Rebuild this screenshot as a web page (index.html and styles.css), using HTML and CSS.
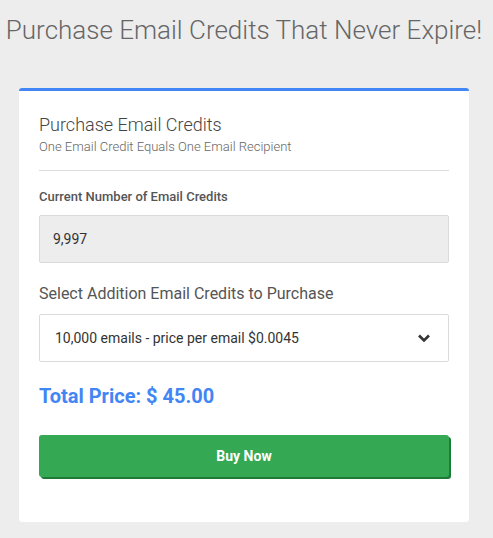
FILE: index.html
```html
<!DOCTYPE html>
<html lang="en">
<head>
    <meta charset="UTF-8">
    <meta name="viewport" content="width=device-width, initial-scale=1.0">
    <title>Purchase Email Credits</title>
    <link rel="stylesheet" href="styles.css">
</head>
<body>
<div class="page">
    <h1 class="page-title">Purchase Email Credits That Never Expire!</h1>

    <div class="card">
        <div class="card-head">
            <h2>Purchase Email Credits</h2>
            <p>One Email Credit Equals One Email Recipient</p>
        </div>

        <form id="creditsForm">
            <label class="small-label" for="current_credits">Current Number of Email Credits</label>
            <input type="text" id="current_credits" value="9,997" readonly>

            <label class="big-label" for="credit_pack">Select Addition Email Credits to Purchase</label>
            <div class="select-wrap">
                <select id="credit_pack">
                    <option>10,000 emails - price per email $0.0045</option>
                </select>
                <svg class="chevron" width="14" height="10" viewBox="0 0 14 10">
                    <path d="M2 2.5 L7 7.5 L12 2.5" fill="none" stroke="#333" stroke-width="2.6"/>
                </svg>
            </div>

            <div class="total">Total Price: $ 45.00</div>

            <button type="button" class="buy-btn">Buy Now</button>
        </form>
    </div>
</div>
</body>
</html>
```

FILE: styles.css
```css
body {
    margin: 0;
    background-color: #ededed;
    font-family: Roboto, "Liberation Sans", sans-serif;
    color: #555;
}
.page {
    width: 488px;
    padding-top: 11px;
}
.page-title {
    margin: 0 0 39px 0;
    text-align: center;
    white-space: nowrap;
    font-size: 26px;
    font-weight: 300;
    color: #666;
    line-height: 38px;
}
.card {
    width: 450px;
    margin: 0 auto;
    box-sizing: border-box;
    background: #fff;
    border-top: 3px solid #4285f4;
    border-radius: 3px;
    padding: 23px 20px 45px 20px;
}
.card-head {
    border-bottom: 1px solid #ddd;
    padding-bottom: 15px;
    margin-bottom: 18px;
}
.card-head h2 {
    margin: 0;
    font-size: 18px;
    font-weight: 300;
    color: #444;
    line-height: 22px;
}
.card-head p {
    margin: 2px 0 0 0;
    font-size: 13px;
    font-weight: 300;
    color: #666;
    line-height: 17px;
}
.small-label {
    display: block;
    font-size: 13px;
    font-weight: 500;
    color: #555;
    line-height: 16px;
    margin-bottom: 10px;
}
input[type="text"] {
    display: block;
    width: 100%;
    height: 48px;
    box-sizing: border-box;
    padding: 0 13px;
    border: 1px solid #dadada;
    border-radius: 2px;
    background: #ededed;
    font-family: Roboto, "Liberation Sans", sans-serif;
    font-size: 14px;
    color: #333;
    margin-bottom: 21px;
}
.big-label {
    display: block;
    font-size: 16px;
    color: #555;
    line-height: 20px;
    margin-bottom: 10px;
}
.select-wrap {
    position: relative;
}
select {
    display: block;
    width: 100%;
    height: 48px;
    box-sizing: border-box;
    padding: 0 15px;
    border: 1px solid #dadada;
    border-radius: 2px;
    background: #fff;
    appearance: none;
    -webkit-appearance: none;
    font-family: Roboto, "Liberation Sans", sans-serif;
    font-size: 14px;
    color: #333;
}
.chevron {
    position: absolute;
    right: 18px;
    top: 19px;
    pointer-events: none;
}
.total {
    margin-top: 22px;
    font-size: 20px;
    font-weight: 700;
    color: #4285f4;
    line-height: 24px;
}
.buy-btn {
    display: block;
    width: 100%;
    height: 42px;
    margin-top: 27px;
    border: none;
    border-radius: 3px;
    background-color: #34a853;
    box-shadow: 2px 2px 0 #1e7b36;
    color: #fff;
    font-family: Roboto, "Liberation Sans", sans-serif;
    font-size: 14px;
    font-weight: 700;
    cursor: pointer;
}
```
